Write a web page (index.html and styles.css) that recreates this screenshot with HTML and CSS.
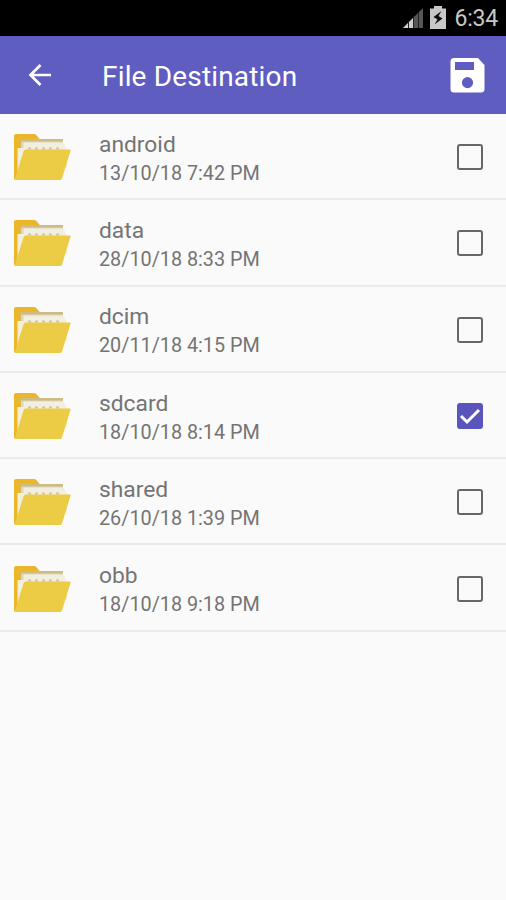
FILE: index.html
```html
<!DOCTYPE html>
<html lang="en">

<head>
    <meta charset="UTF-8">
    <meta name="viewport" content="width=device-width, initial-scale=1">
    <title>File Destination</title>
    <link rel="stylesheet" href="styles.css">
</head>

<body>
    <svg width="0" height="0" class="sprite">
        <symbol id="folder" viewBox="0 0 58 48">
            <path d="M1 3q0-2 2-2h18q1.500 0 2.500 1.200l4 4.800v40H3q-2 0-2-2z" fill="#ebb62a"/>
            <path d="M7.500 6h42.500v25H7.500z" fill="#cdbb84"/>
            <path d="M8 8.500h42v25H8z" fill="#ddd6bc"/>
            <path d="M10.500 9.500h40L54 17v18H10.500z" fill="#f3efe0"/>
            <path d="M4.500 15h9v20l-9 6z" fill="#f4efd9"/>
            <path d="M15 15.500h32" stroke="#c9c6ae" stroke-width="2" stroke-dasharray="3 4"/>
            <path d="M13 16.500H57q1 0 .6 1L49 45.500q-.5 1.500-2 1.500H2.500q-1 0-.5-1.500l8.500-27q.5-2 2.500-2z" fill="#eccb45"/>
        </symbol>
    </svg>

    <div class="status-bar">
        <svg class="signal" width="20" height="22" viewBox="0 0 20 22">
            <path d="M0 21L20 1v20z" fill="#565656"/>
            <path d="M0 21l10-10v10z" fill="#d0d0d0"/>
            <path d="M5.500 14v7M10.500 9v12M15.500 5v16" stroke="#222" stroke-width="1"/>
        </svg>
        <svg class="battery" width="16" height="23" viewBox="0 0 16 23">
            <path d="M4 0h8v2.500h4V23H0V2.500h4z" fill="#c8c8c8"/>
            <path d="M11.500 5L3.500 11l4 2.500-3 5 8-6-4-2.500z" fill="#111"/>
        </svg>
        <span class="clock">6:34</span>
    </div>

    <header class="toolbar">
        <svg class="back" width="24" height="24" viewBox="0 0 24 24">
            <path d="M23 12H2.500M12.500 2l-10 10 10 10" fill="none" stroke="#fff" stroke-width="2.700"/>
        </svg>
        <h1>File Destination</h1>
        <svg class="save" width="35" height="35" viewBox="0 0 35 35">
            <path fill="#fff" fill-rule="evenodd" d="M4 0h24l6.500 7v24q0 3.500-3.500 3.500H4q-3.500 0-3.500-3.500V4q0-4 3.500-4zM5 4v8h19V4zM17.500 19a5.600 5.600 0 1 0 0 11.200a5.600 5.600 0 1 0 0-11.200z"/>
        </svg>
    </header>

    <div class="files">
        <label class="file">
            <svg class="folder"><use href="#folder"/></svg>
            <span class="info">
                <span class="name">android</span>
                <span class="date">13/10/18 7:42 PM</span>
            </span>
            <input type="checkbox">
        </label>
        <label class="file">
            <svg class="folder"><use href="#folder"/></svg>
            <span class="info">
                <span class="name">data</span>
                <span class="date">28/10/18 8:33 PM</span>
            </span>
            <input type="checkbox">
        </label>
        <label class="file">
            <svg class="folder"><use href="#folder"/></svg>
            <span class="info">
                <span class="name">dcim</span>
                <span class="date">20/11/18 4:15 PM</span>
            </span>
            <input type="checkbox">
        </label>
        <label class="file">
            <svg class="folder"><use href="#folder"/></svg>
            <span class="info">
                <span class="name">sdcard</span>
                <span class="date">18/10/18 8:14 PM</span>
            </span>
            <input type="checkbox" checked>
        </label>
        <label class="file">
            <svg class="folder"><use href="#folder"/></svg>
            <span class="info">
                <span class="name">shared</span>
                <span class="date">26/10/18 1:39 PM</span>
            </span>
            <input type="checkbox">
        </label>
        <label class="file">
            <svg class="folder"><use href="#folder"/></svg>
            <span class="info">
                <span class="name">obb</span>
                <span class="date">18/10/18 9:18 PM</span>
            </span>
            <input type="checkbox">
        </label>
    </div>
</body>

</html>
```
FILE: styles.css
```css
* {
    box-sizing: border-box;
}

body {
    margin: 0;
    min-height: 100vh;
    background-color: #fafafa;
    font-family: Roboto, sans-serif;
}

.sprite {
    display: block;
}

.status-bar {
    display: flex;
    justify-content: flex-end;
    align-items: center;
    height: 36px;
    padding-right: 8px;
    background-color: #000;
    color: #c8c8c8;
}

.signal {
    margin-right: 7px;
}

.battery {
    margin: 0 8px 2px 0;
}

.clock {
    font-size: 23px;
    line-height: 36px;
    letter-spacing: -0.2px;
    padding-top: 2px;
}

.toolbar {
    display: flex;
    align-items: center;
    height: 78px;
    padding: 0 21px 0 28px;
    background-color: #605dc0;
    color: #fff;
}

.toolbar h1 {
    flex: 1;
    margin: 0 0 0 50px;
    font-size: 28px;
    font-weight: 400;
    letter-spacing: 0.17px;
    line-height: 36px;
    padding-top: 3px;
}

.file {
    display: flex;
    align-items: center;
    height: 86.3px;
    padding: 2px 23px 0 13px;
    border-bottom: 2px solid #ebebeb;
}

.folder {
    width: 58px;
    height: 48px;
}

.info {
    display: flex;
    flex: 1;
    flex-direction: column;
    margin-left: 28px;
    padding-top: 4px;
    color: #747474;
}

.name {
    font-size: 22.8px;
    line-height: 28px;
}

.date {
    font-size: 19.8px;
    line-height: 28px;
    padding-top: 1px;
}

.file input {
    appearance: none;
    width: 26px;
    height: 26px;
    margin: 0;
    border: 2.5px solid #666;
    border-radius: 3px;
}

.file input:checked {
    border-color: #5a54bd;
    background: #5a54bd url("data:image/svg+xml,%3Csvg xmlns='http://www.w3.org/2000/svg' viewBox='0 0 22 22'%3E%3Cpath d='M2 11l6 6L20 5' fill='none' stroke='white' stroke-width='3'/%3E%3C/svg%3E") center / 22px no-repeat;
}
```
